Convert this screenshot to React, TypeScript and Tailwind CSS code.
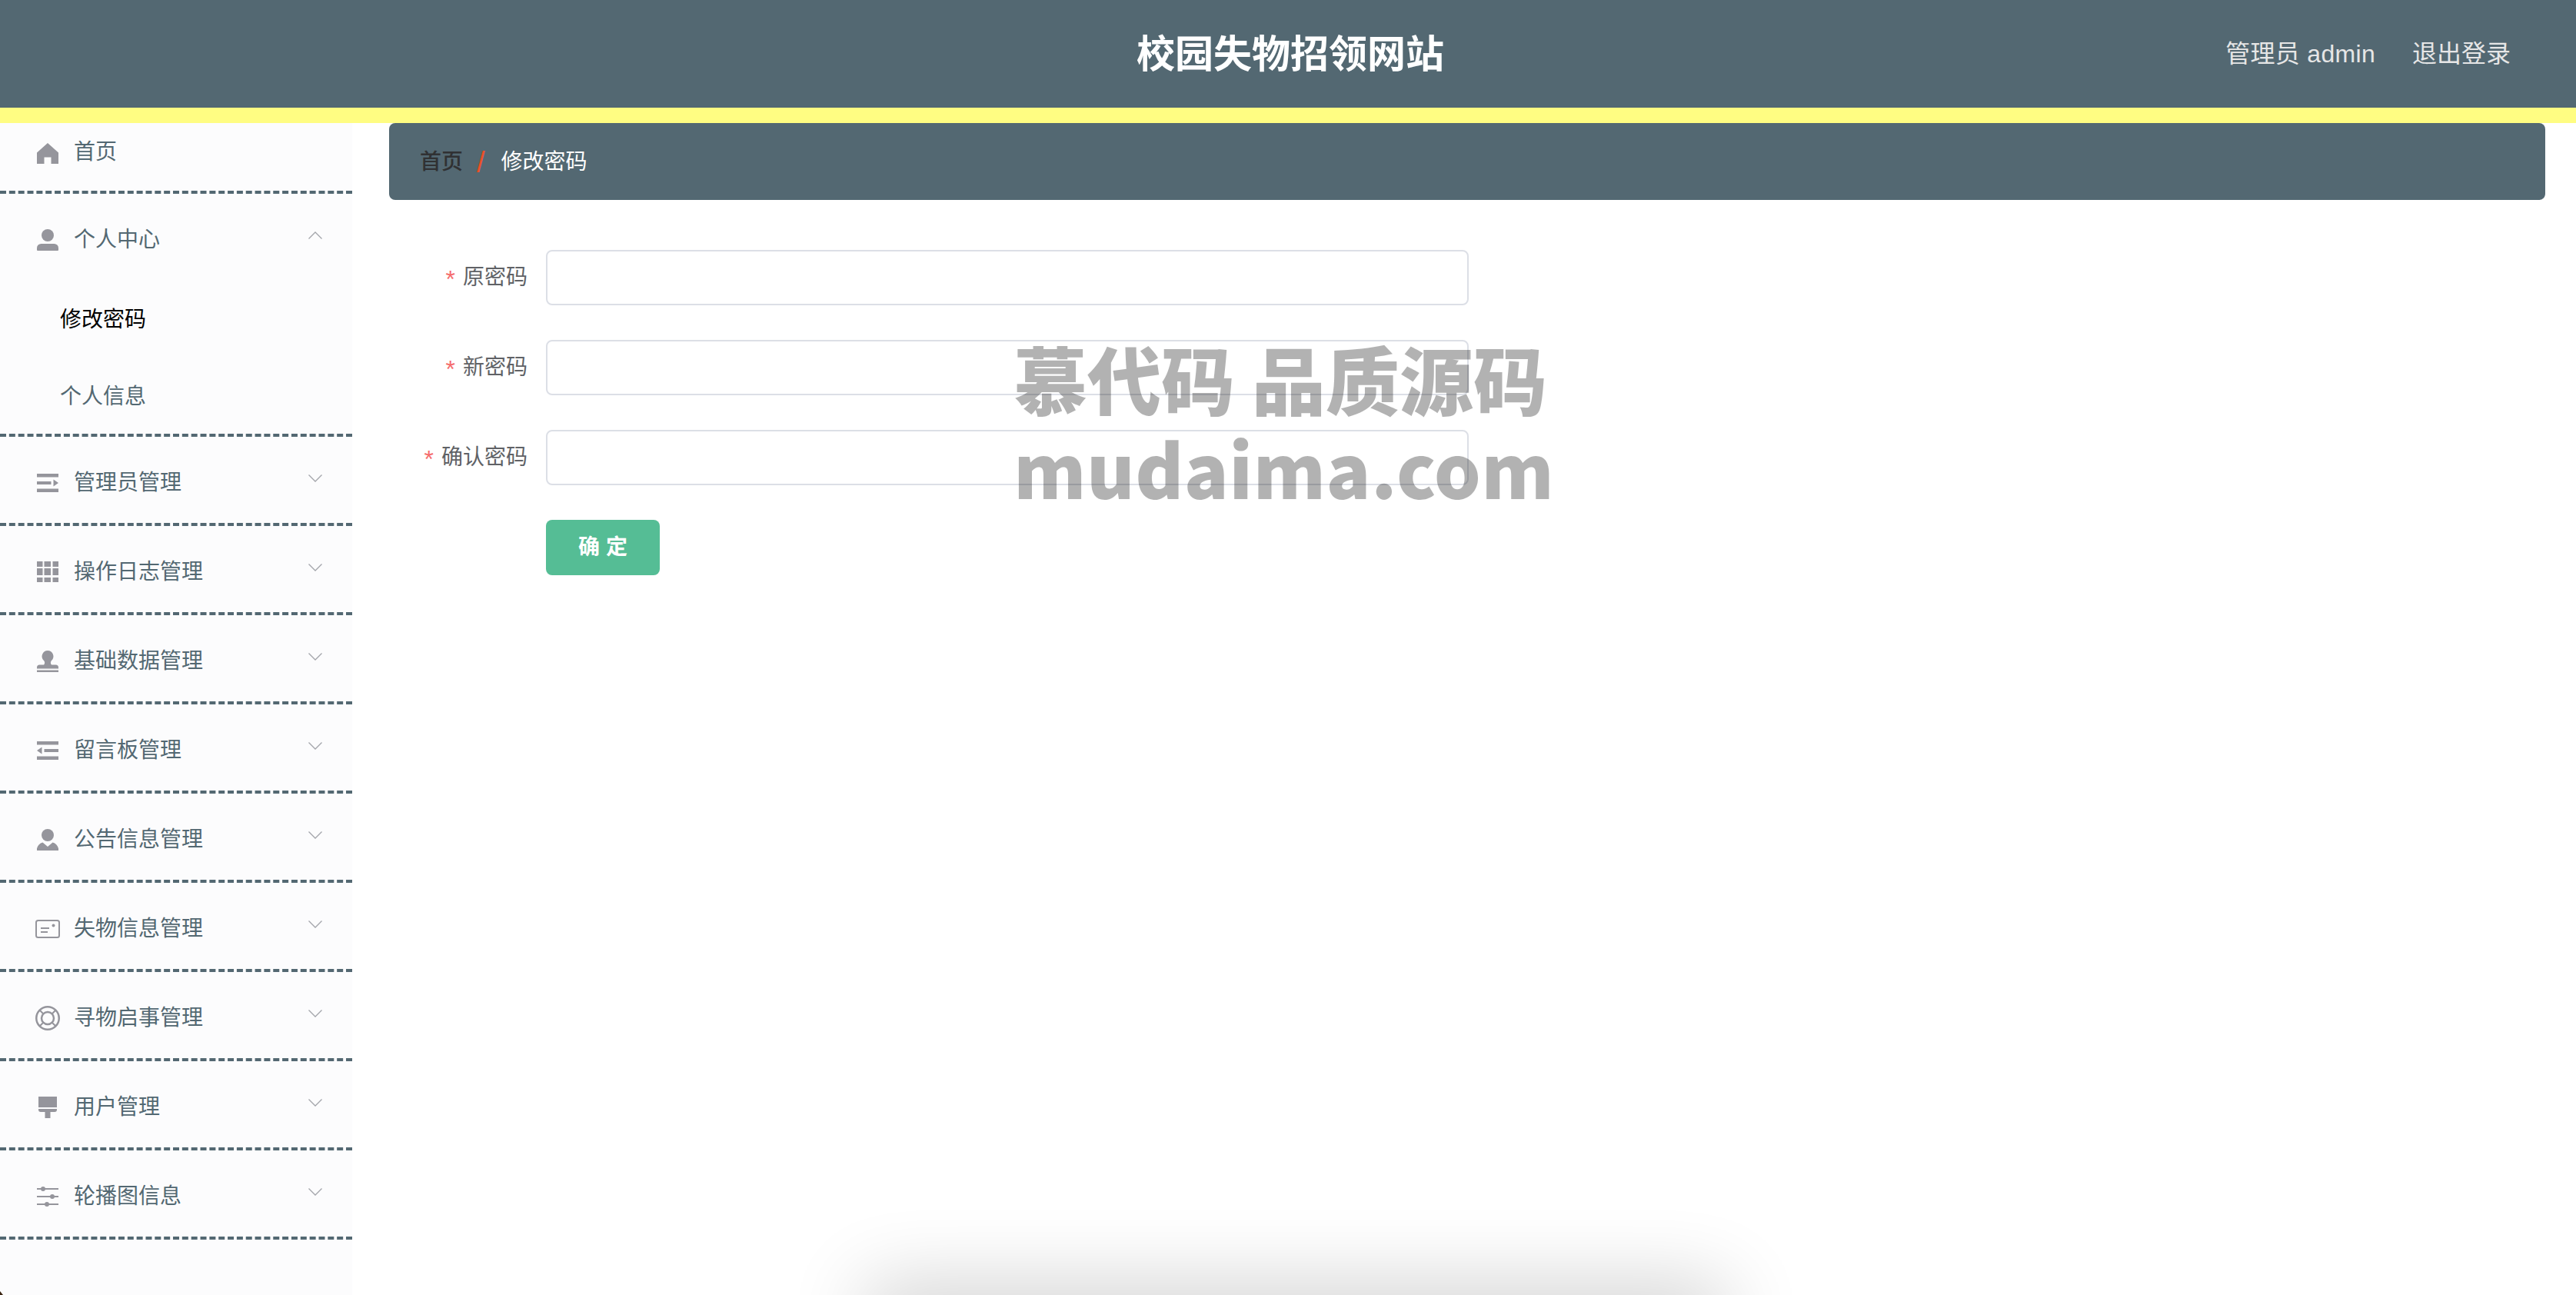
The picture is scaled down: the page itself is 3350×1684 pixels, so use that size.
import type { ReactNode } from "react";

const cjk = "font-['Liberation_Sans','Noto_Sans_CJK_SC',sans-serif]";

function Glyph({ children }: { children: ReactNode }) {
  return (
    <svg viewBox="0 0 28 28" className="h-[28px] w-[28px] shrink-0 fill-[#95959c]">
      {children}
    </svg>
  );
}

const HomeIcon = () => (
  <Glyph>
    <path d="M14 1 28 13.500V28H18.500V19.500H9.500V28H0V13.500Z" />
  </Glyph>
);
const UserIcon = () => (
  <Glyph>
    <circle cx="14" cy="8" r="8" />
    <path d="M5.500 19h17a5.500 5.500 0 0 1 5.500 5.500V27a1 1 0 0 1-1 1H1a1 1 0 0 1-1-1v-2.500A5.500 5.500 0 0 1 5.500 19Z" />
  </Glyph>
);
const UnfoldIcon = () => (
  <Glyph>
    <path d="M0 2h28v4.500H0ZM0 12h18.500v4H0ZM0 21.500h28V26H0ZM21.500 9.500l6.500 4.500-6.500 4.500Z" />
  </Glyph>
);
const FoldIcon = () => (
  <Glyph>
    <path d="M0 2h28v4.500H0ZM9.500 12H28v4H9.500ZM0 21.500h28V26H0ZM6.500 9.500 0 14l6.500 4.500Z" />
  </Glyph>
);
const GridIcon = () => (
  <Glyph>
    <path d="M0 0h7.500v7H0ZM9.500 0H18v7H9.500ZM20.500 0H28v7h-7.500ZM0 9h7.500v9H0ZM9.500 9H18v9H9.500ZM20.500 9H28v9h-7.500ZM0 21h7.500v6H0ZM9.500 21H18v6H9.500ZM20.500 21H28v6h-7.500Z" />
  </Glyph>
);
const StampIcon = () => (
  <Glyph>
    <path d="M14 0a7.500 7.500 0 0 1 5 13c-1.500 1.500-1.500 4 0 5.500h5.500A3.500 3.500 0 0 1 28 22v1.500H0V22a3.500 3.500 0 0 1 3.500-3.500H9c1.500-1.500 1.500-4 0-5.500a7.500 7.500 0 0 1 5-13ZM0 25.500h28V28H0Z" />
  </Glyph>
);
const PersonIcon = () => (
  <Glyph>
    <circle cx="14" cy="8" r="8" />
    <path d="M7.500 17.500 14 23l6.500-5.500c4.500 1 7.500 5 8 10.500h-29c.5-5.500 3.500-9.500 8-10.500Z" />
  </Glyph>
);
const CardIcon = () => (
  <svg viewBox="0 0 32 24" className="h-[24px] w-[32px] shrink-0">
    <rect x="1" y="1" width="30" height="22" rx="2.500" fill="none" stroke="#95959c" strokeWidth="2" />
    <path d="M7 10h11v2H7ZM7 15h9v2H7Z" fill="#95959c" />
    <circle cx="23.500" cy="7.500" r="2" fill="#95959c" />
  </svg>
);
const BuoyIcon = () => (
  <svg viewBox="0 0 32 32" className="h-[32px] w-[32px] shrink-0 fill-none stroke-[#95959c]">
    <circle cx="16" cy="16" r="14.750" strokeWidth="2.500" />
    <circle cx="16" cy="16" r="8" strokeWidth="2.500" />
    <path d="M6 6l4.500 4.500M26 6l-4.500 4.500M6 26l4.500-4.500M26 26l-4.500-4.500" strokeWidth="2" />
  </svg>
);
const BrushIcon = () => (
  <Glyph>
    <path d="M2 0h24v14H2ZM2 16h24v1a3 3 0 0 1-3 3h-5.500v7a3.500 3.500 0 0 1-7 0v-7H5a3 3 0 0 1-3-3Z" />
  </Glyph>
);
const SlidersIcon = () => (
  <Glyph>
    <path d="M0 3h28v2H0ZM0 13h28v2H0ZM0 23h28v2H0Z" />
    <circle cx="8" cy="4" r="3" />
    <circle cx="20" cy="14" r="3" />
    <circle cx="13" cy="24" r="3" />
  </Glyph>
);

function Chevron({ up }: { up?: boolean }) {
  return (
    <svg viewBox="0 0 18 10" className="mb-[12px] h-[10px] w-[18px] fill-none stroke-[#a3a5aa] stroke-[1.300]">
      <path d={up ? "M.500 9.500 9 1l8.500 8.500" : "M.500.500 9 9 17.500.500"} />
    </svg>
  );
}

const menus: { label: string; icon: ReactNode }[] = [
  { label: "管理员管理", icon: <UnfoldIcon /> },
  { label: "操作日志管理", icon: <GridIcon /> },
  { label: "基础数据管理", icon: <StampIcon /> },
  { label: "留言板管理", icon: <FoldIcon /> },
  { label: "公告信息管理", icon: <PersonIcon /> },
  { label: "失物信息管理", icon: <CardIcon /> },
  { label: "寻物启事管理", icon: <BuoyIcon /> },
  { label: "用户管理", icon: <BrushIcon /> },
  { label: "轮播图信息", icon: <SlidersIcon /> },
];

function MenuRow({ label, icon, up }: { label: string; icon: ReactNode; up?: boolean }) {
  return (
    <div className="flex h-[112px] items-center pl-[48px] pr-[39px] pt-[8px] text-[28px] text-[#536872]">
      <span className="flex w-[28px] shrink-0 justify-center">{icon}</span>
      <span className="ml-[20px] flex-1">{label}</span>
      <Chevron up={up} />
    </div>
  );
}

function Field({ label }: { label: string }) {
  return (
    <div className="flex h-[72px] items-center">
      <label className="w-[204px] pr-[24px] text-right text-[28px] leading-[40px] text-[#606266]">
        <span className="relative top-[4px] mr-[10px] text-[32px] leading-none text-[#f56c6c]">*</span>
        {label}
      </label>
      <input
        type="password"
        className="h-[72px] w-[1200px] rounded-[8px] border-2 border-[#dcdfe6] bg-white outline-none"
      />
    </div>
  );
}

export default function App() {
  return (
    <div className={`relative flex h-[1684px] w-[3350px] flex-col overflow-hidden bg-white ${cjk}`}>
      <header className="grid h-[160px] shrink-0 grid-cols-[1fr_auto_1fr] items-center border-b-[20px] border-[#fffd82] bg-[#536872] pl-[6px]">
        <div />
        <h1 className="pt-[3px] text-[50px] font-bold text-white">校园失物招领网站</h1>
        <div className="flex justify-end gap-[48px] pr-[85px] text-[32px] text-[#e6e6e6]">
          <span className="tracking-[0.3px]">管理员 admin</span>
          <span>退出登录</span>
        </div>
      </header>

      <div className="flex min-h-0 flex-1">
        <aside className="w-[458px] shrink-0 bg-[#fcfcfd]">
          <div className="flex h-[92px] items-start border-b-4 border-dashed border-[#536872] pl-[48px] pt-[18px] text-[28px] text-[#536872]">
            <span className="mt-[7px] flex">
              <HomeIcon />
            </span>
            <span className="ml-[20px] leading-[40px]">首页</span>
          </div>
          <div className="border-b-4 border-dashed border-[#536872]">
            <MenuRow label="个人中心" icon={<UserIcon />} up />
            <div className="flex h-[100px] items-center pl-[78px] pt-[4px] text-[28px] text-black">修改密码</div>
            <div className="flex h-[100px] items-center pl-[78px] pt-[4px] text-[28px] text-[#536872]">个人信息</div>
          </div>
          {menus.map((m) => (
            <div key={m.label} className="border-b-4 border-dashed border-[#536872]">
              <MenuRow label={m.label} icon={m.icon} />
            </div>
          ))}
        </aside>

        <main className="flex-1 pl-[48px] pr-[40px]">
          <nav className="flex h-[100px] items-center rounded-[8px] bg-[#536872] pl-[40px] pt-[2px] text-[28px]">
            <span className="font-medium text-[#303133]">首页</span>
            <span className="ml-[18px] mr-[21px] text-[38px] leading-none text-[#ea5027]">/</span>
            <span className="text-white">修改密码</span>
          </nav>
          <form className="mt-[65px] flex flex-col gap-[45px]">
            <Field label="原密码" />
            <Field label="新密码" />
            <Field label="确认密码" />
            <div className="pl-[204px]">
              <button
                type="button"
                className="h-[72px] w-[148px] rounded-[8px] bg-[#55bd95] text-[28px] font-bold text-white"
              >
                确 定
              </button>
            </div>
          </form>
        </main>
      </div>

      <div className="pointer-events-none absolute left-[1318px] top-[432px] whitespace-nowrap font-['Noto_Sans_CJK_SC',sans-serif] text-[96px] font-black leading-[117px] text-black/30">
        <div>慕代码 品质源码</div>
        <div className="tracking-[0.4px]">mudaima.com</div>
      </div>

      <div className="pointer-events-none absolute left-[1140px] top-[1684px] h-[60px] w-[1090px] shadow-[0_0_100px_14px_rgba(0,0,0,0.19)]" />

      <svg viewBox="0 0 4 5" className="absolute bottom-0 left-0 h-[5px] w-[4px] fill-[#3a2412]">
        <path d="M0 0 4 5H0Z" />
      </svg>
    </div>
  );
}
